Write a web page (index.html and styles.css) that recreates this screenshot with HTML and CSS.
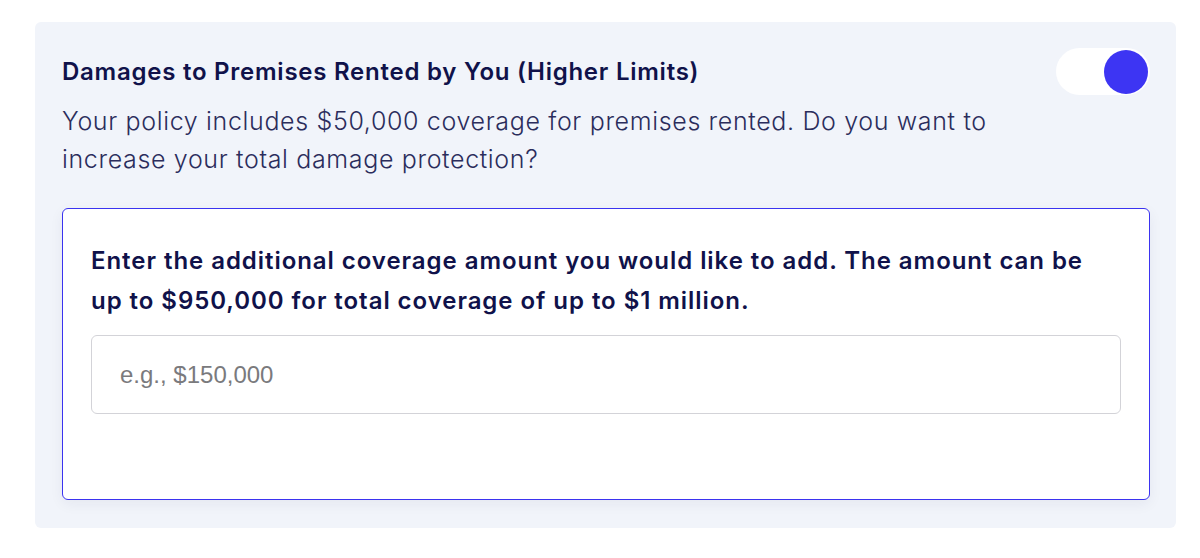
FILE: index.html
```html
<!DOCTYPE html>
<html lang="en">
<head>
  <meta charset="UTF-8">
  <meta name="viewport" content="width=device-width, initial-scale=1.0">
  <title>Damages to Premises Rented by You</title>
  <link rel="stylesheet" href="styles.css">
</head>
<body>
  <div class="coverage-card">
    <div class="coverage-header">
      <h3 class="coverage-title">Damages to Premises Rented by You (Higher Limits)</h3>
      <label class="toggle">
        <input type="checkbox" checked>
        <span class="toggle-track"><span class="toggle-knob"></span></span>
      </label>
    </div>
    <p class="coverage-desc">Your policy includes $50,000 coverage for premises rented. Do you want to increase your total damage protection?</p>

    <div class="coverage-extra">
      <p class="extra-label">Enter the additional coverage amount you would like to add. The amount can be up to $950,000 for total coverage of up to $1 million.</p>
      <input type="text" class="amount-input" placeholder="e.g., $150,000">
    </div>
  </div>
</body>
</html>
```

FILE: styles.css
```css
body {
  margin: 0;
  padding: 22px 24px 0 35px;
  font-family: Inter, Lato, sans-serif;
  background-color: #fff;
}
.coverage-card {
  background-color: #f1f4fa;
  border-radius: 6px;
  padding: 26px 26px 28px 27px;
}
.coverage-header {
  display: flex;
  align-items: center;
  justify-content: space-between;
}
.coverage-title {
  margin: 0;
  font-size: 24px;
  font-weight: 600;
  letter-spacing: 0.75px;
  color: #10124a;
}
.toggle input {
  display: none;
}
.toggle-track {
  display: flex;
  justify-content: flex-end;
  align-items: center;
  width: 94px;
  height: 47px;
  padding: 0 2px;
  box-sizing: border-box;
  border-radius: 24px;
  background-color: #fff;
  cursor: pointer;
}
.toggle-knob {
  width: 44px;
  height: 44px;
  border-radius: 50%;
  background-color: #3d35f3;
}
.coverage-desc {
  margin: 7px 0 30px;
  font-size: 25px;
  font-weight: 300;
  letter-spacing: 0.65px;
  line-height: 38px;
  color: #2b2d5c;
  max-width: 950px;
}
.coverage-extra {
  background-color: #fff;
  border: 1.5px solid #3b33f0;
  border-radius: 6px;
  padding: 32px 28px 85px 28px;
  box-shadow: 0 4px 14px rgba(30, 40, 90, 0.06);
}
.extra-label {
  margin: 0 0 14px;
  font-size: 24px;
  font-weight: 600;
  letter-spacing: 0.95px;
  line-height: 40px;
  color: #10124a;
  max-width: 1020px;
}
.amount-input {
  display: block;
  width: 100%;
  height: 79px;
  box-sizing: border-box;
  padding: 0 28px;
  border: 1.5px solid #d3d3d8;
  border-radius: 6px;
  font-family: "Liberation Sans", Arial, sans-serif;
  font-size: 24px;
  color: #222;
  outline: none;
}
.amount-input::placeholder {
  color: #7a7a7d;
}
```
